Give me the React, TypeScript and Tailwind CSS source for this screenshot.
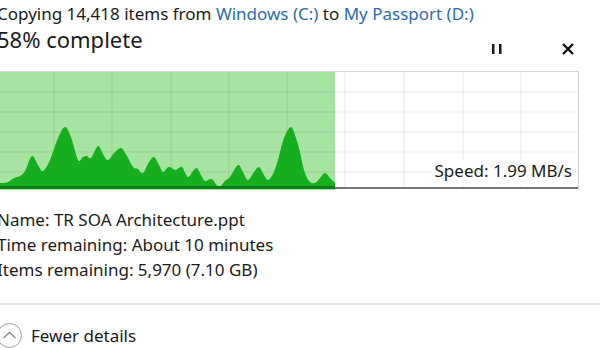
import React from "react";

const wave: [number, number][] = [
  [-4, 182], [3, 183], [8, 182], [14, 178], [20, 176], [25, 171], [32, 156],
  [38, 165], [43, 171], [50, 160], [58, 138], [65, 127], [71, 137], [78, 160],
  [83, 157], [87, 156], [91, 158], [98, 146], [103, 154], [108, 160], [115, 152],
  [121, 148], [127, 156], [133, 167], [138, 169], [143, 173], [149, 162],
  [154, 157], [159, 165], [163, 172], [167, 168], [170, 167], [175, 170],
  [179, 168], [182, 167], [188, 177], [193, 171], [197, 168], [201, 175],
  [205, 181], [210, 179], [213, 180], [219, 187], [225, 181], [230, 177],
  [238, 165], [243, 172], [248, 180], [254, 172], [259, 167], [264, 175],
  [268, 180], [273, 174], [278, 160], [284, 138], [291, 127], [296, 138],
  [300, 152], [304, 170], [309, 181], [315, 183], [320, 178], [325, 173],
  [330, 178], [335, 183],
];

// catmull-rom -> bezier so the curve looks smooth like the windows graph
function smooth(pts: [number, number][]) {
  let d = `M${pts[0][0]},188 L${pts[0][0]},${pts[0][1]}`;
  for (let i = 0; i < pts.length - 1; i++) {
    const p0 = pts[i - 1] ?? pts[i];
    const p1 = pts[i];
    const p2 = pts[i + 1];
    const p3 = pts[i + 2] ?? p2;
    const c1x = p1[0] + (p2[0] - p0[0]) / 6;
    const c1y = p1[1] + (p2[1] - p0[1]) / 6;
    const c2x = p2[0] - (p3[0] - p1[0]) / 6;
    const c2y = p2[1] - (p3[1] - p1[1]) / 6;
    d += ` C${c1x},${c1y} ${c2x},${c2y} ${p2[0]},${p2[1]}`;
  }
  return d + ` L335,188 Z`;
}

const cols = [54, 112, 171, 229, 287, 345, 404, 463, 521];
const rows = [92, 112, 132, 152, 172];

function SpeedChart() {
  return (
    <div className="relative h-[119px] w-[583px] border-t border-r border-[#d4d4d4]">
      <svg width="582" height="118" viewBox="-4 72 582 118" className="block">
        <rect x="-4" y="72" width="339" height="118" fill="#a8e4a1" />
        {cols.map((x) => (
          <line key={x} x1={x} x2={x} y1="72" y2="188" stroke="rgba(0,0,0,0.09)" strokeWidth="1" />
        ))}
        {rows.map((y) => (
          <line key={y} x1="-4" x2="578" y1={y} y2={y} stroke="rgba(0,0,0,0.09)" strokeWidth="1" />
        ))}
        <path d={smooth(wave)} fill="#16ad1e" />
        <rect x="335" y="187" width="243" height="2" fill="#777777" />
        <rect x="-4" y="186" width="339" height="3" fill="#0c7f14" />
      </svg>
      <div className="absolute right-[6px] bottom-[5px] bg-white pb-[3px] pl-[3px] text-[17px] leading-[22px] text-[#1b1b1b]">
        Speed: 1.99 MB/s
      </div>
    </div>
  );
}

export default function App() {
  return (
    <div
      className="h-[348px] w-[600px] overflow-hidden bg-white text-[#1b1b1b]"
      style={{ fontFamily: '"Noto Sans", "Open Sans", sans-serif' }}
    >
      <div className="-ml-1 w-[583px]">
        <div className="h-[26px] whitespace-nowrap pl-[1px] pt-[2px] text-[17px] leading-[24px]">
          Copying 14,418 items from <span className="text-[#2b6cb0]">Windows (C:)</span> to{" "}
          <span className="text-[#2b6cb0]">My Passport (D:)</span>
        </div>

        <div className="flex h-[28px] justify-between">
          <div className="-mt-[1px] pl-[1px] text-[22px] leading-[28px]">58% complete</div>
          <div className="mt-[17px] flex h-[12px] items-center gap-[60px] pr-[5px]">
            <svg width="10" height="11" viewBox="0 0 10 11">
              <rect x="0" y="0" width="2.5" height="10" fill="#1b1b1b" />
              <rect x="7" y="0" width="2.5" height="10" fill="#1b1b1b" />
            </svg>
            <svg width="12" height="12" viewBox="0 0 12 12">
              <path d="M1 1 L11 11 M11 1 L1 11" stroke="#111" strokeWidth="2.4" />
            </svg>
          </div>
        </div>

        <div className="mt-[17px]">
          <SpeedChart />
        </div>

        <div className="mt-[17px] pl-[1px] text-[17px] leading-[25px]">
          <div>Name: TR SOA Architecture.ppt</div>
          <div>Time remaining: About 10 minutes</div>
          <div>Items remaining: 5,970 (7.10 GB)</div>
        </div>
      </div>

      <div className="mt-[21px] h-[2px] w-full bg-[#e3e3e3]" />

      <div className="-ml-[3px] mt-[18px] flex items-center gap-[9px]">
        <svg width="25" height="25" viewBox="0 0 25 25">
          <circle cx="12.5" cy="12.5" r="12" fill="none" stroke="#a0a0a0" strokeWidth="1" />
          <path d="M6.5 15 L12.5 9.5 L18.5 15" fill="none" stroke="#8a8a8a" strokeWidth="1.3" />
        </svg>
        <span className="text-[17px] leading-[25px]">Fewer details</span>
      </div>
    </div>
  );
}
